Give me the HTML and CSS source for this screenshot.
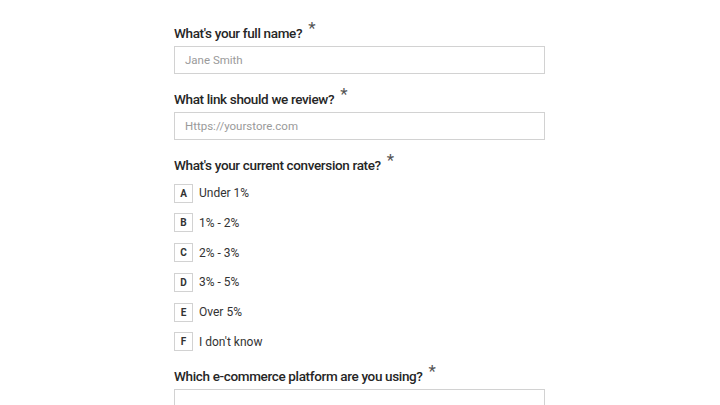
FILE: index.html
```html
<!DOCTYPE html>
<html>
<head>
<meta charset="utf-8">
<link rel="stylesheet" href="styles.css">
</head>
<body>
<form class="form">
  <div class="field">
    <label class="label">What's your full name?<span class="req">*</span></label>
    <div class="input placeholder">Jane Smith</div>
  </div>
  <div class="field">
    <label class="label">What link should we review?<span class="req">*</span></label>
    <div class="input placeholder">Https://yourstore.com</div>
  </div>
  <div class="field">
    <label class="label">What's your current conversion rate?<span class="req">*</span></label>
    <div class="options">
      <div class="option"><span class="key">A</span><span class="opt-text">Under 1%</span></div>
      <div class="option"><span class="key">B</span><span class="opt-text">1% - 2%</span></div>
      <div class="option"><span class="key">C</span><span class="opt-text">2% - 3%</span></div>
      <div class="option"><span class="key">D</span><span class="opt-text">3% - 5%</span></div>
      <div class="option"><span class="key">E</span><span class="opt-text">Over 5%</span></div>
      <div class="option"><span class="key">F</span><span class="opt-text">I don't know</span></div>
    </div>
  </div>
  <div class="field">
    <label class="label">Which e-commerce platform are you using?<span class="req">*</span></label>
    <div class="input select">
      <svg class="chev" width="11" height="7" viewBox="0 0 11 7"><path d="M1 1l4.5 4.5L10 1" fill="none" stroke="#555" stroke-width="1.3"/></svg>
    </div>
  </div>
</form>
</body>
</html>
```
FILE: styles.css
```css
html, body {
  margin: 0;
  padding: 0;
  background: #fff;
}
body {
  font-family: Roboto, "Noto Sans", sans-serif;
  color: #222;
}
.form {
  width: 371px;
  margin-left: 174px;
  padding-top: 23px;
  display: flex;
  flex-direction: column;
  gap: 15px;
}
.field {
  display: flex;
  flex-direction: column;
}
.label {
  display: block;
  font-size: 13.5px;
  font-weight: 500;
  letter-spacing: -0.35px;
  line-height: 20px;
  height: 20px;
  color: #262626;
  margin-bottom: 3px;
}
.req {
  display: inline-block;
  vertical-align: top;
  line-height: 14px;
  margin-top: -2px;
  margin-left: 6px;
  font-size: 17px;
  font-weight: 400;
  color: #555;
}
.input {
  box-sizing: border-box;
  height: 28px;
  border: 1px solid #d2d2d2;
  padding: 0 10px;
  display: flex;
  align-items: center;
  font-size: 12px;
}
.placeholder {
  color: #9a9a9a;
  font-size: 11.5px;
}
.select {
  justify-content: flex-end;
  align-items: flex-end;
}
.chev {
  margin-right: 2px;
  margin-bottom: 1px;
}
.options {
  margin-top: 6px;
  display: flex;
  flex-direction: column;
  gap: 11.8px;
}
.option {
  display: flex;
  align-items: center;
  height: 18px;
}
.key {
  box-sizing: border-box;
  width: 19px;
  height: 19px;
  border: 1px solid #d2d2d2;
  display: flex;
  align-items: center;
  justify-content: center;
  font-size: 10px;
  font-weight: 700;
  color: #333;
}
.opt-text {
  margin-left: 6px;
  font-size: 12px;
  color: #333;
}
```
